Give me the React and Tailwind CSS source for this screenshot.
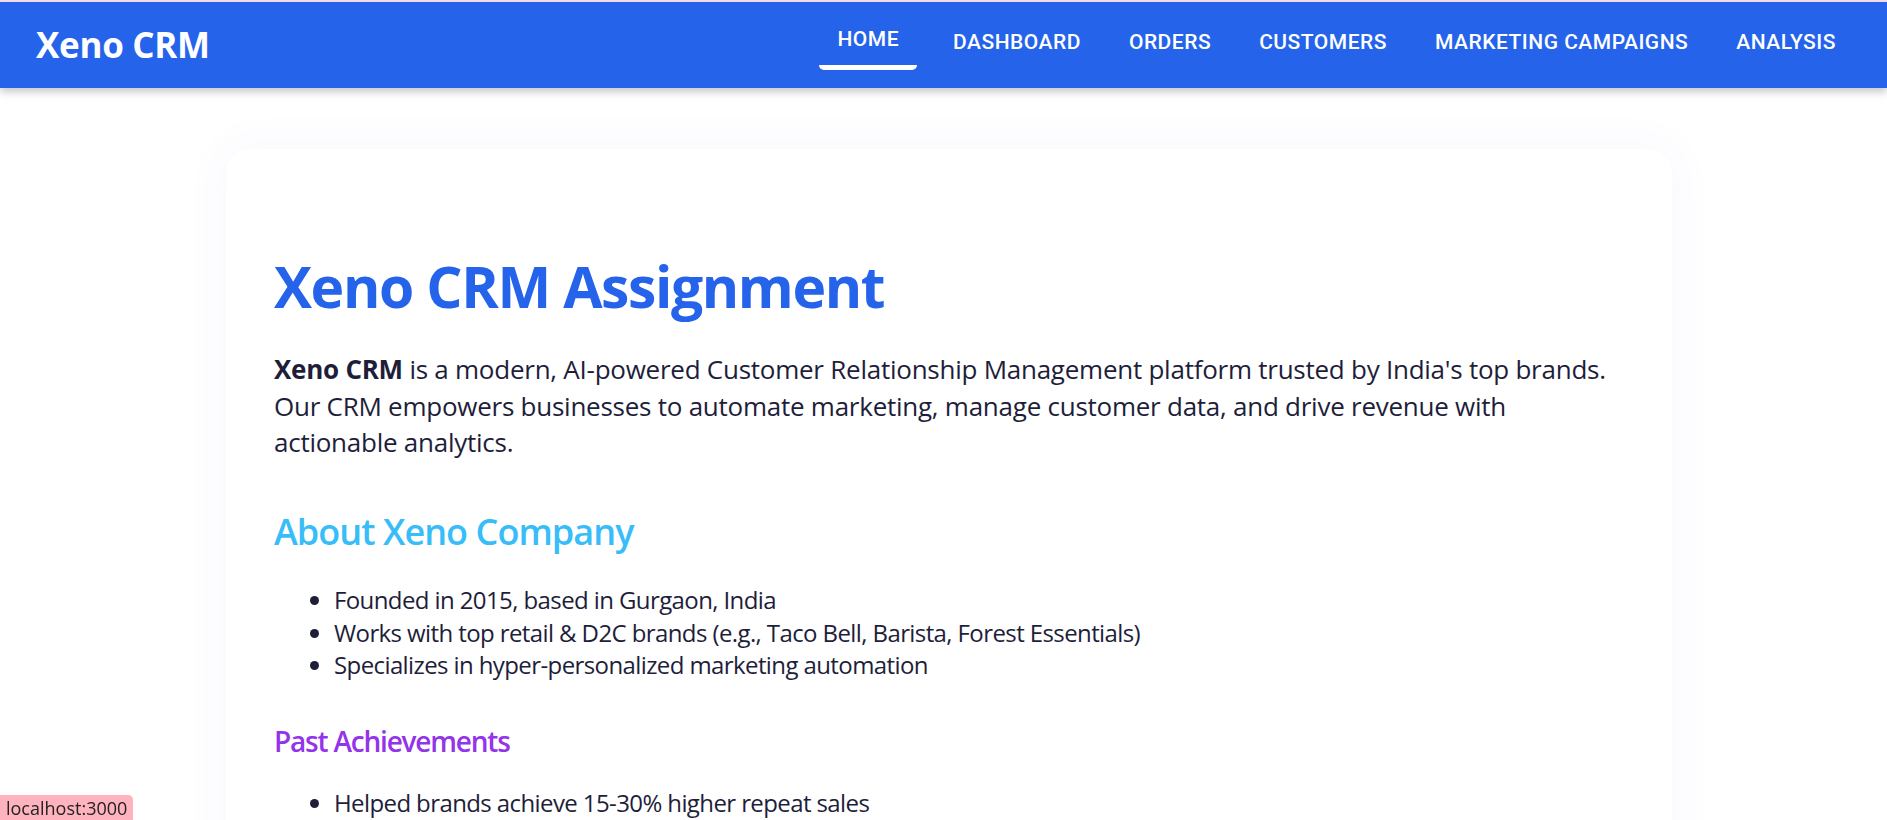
const links = ["Home", "Dashboard", "Orders", "Customers", "Marketing Campaigns", "Analysis"];

const Navbar = () => (
  <header className="relative z-10 flex h-[88px] items-center justify-between border-t-2 border-[#f4dce6] bg-[#2563eb] pl-[36px] pr-[33px] shadow-[0_4px_8px_rgba(0,0,0,0.22)]">
    <span className="font-['Open_Sans',sans-serif] text-[35px] font-bold tracking-[-0.3px] text-white">Xeno CRM</span>
    <nav className="flex items-center gap-3 pb-[7px] font-['Roboto',sans-serif]">
      {links.map((label, i) => (
        <a
          key={label}
          className={`relative cursor-pointer px-[18px] text-[21px] font-medium uppercase leading-[36px] tracking-[0.5px] text-white ${
            i === 0 ? "mr-[6px] -translate-y-[3px]" : ""
          }`}
        >
          {label}
          {i === 0 && <span className="absolute left-0 right-0 top-[44px] h-[5px] rounded-b-[6px] bg-white" />}
        </a>
      ))}
    </nav>
  </header>
);

export default function App() {
  return (
    <div className="min-h-screen bg-white font-['Open_Sans',sans-serif] text-[#1e1e3a]">
      <Navbar />
      <main className="pt-[61px]">
        <div className="ml-[226px] w-[1446px] rounded-[24px] bg-white px-12 pb-12 pt-[103px] shadow-[0_0_44px_6px_rgba(79,70,229,0.035)]">
          <h1 className="text-[57px] font-bold leading-[1.2] tracking-[-1.4px] text-[#2563eb]">Xeno CRM Assignment</h1>
          <p className="mt-[31px] text-[26px] leading-[36.5px] tracking-[-0.25px]">
            <strong className="font-bold">Xeno CRM</strong> is a modern, AI-powered Customer Relationship Management platform trusted by India's top brands. Our CRM empowers businesses to automate marketing, manage customer data, and drive revenue with actionable analytics.
          </p>

          <h2 className="mt-[49px] text-[36px] font-semibold leading-[1.2] tracking-[-0.95px] text-[#38bdf8]">About Xeno Company</h2>
          <ul className="mt-[31px] list-disc pl-[60px] text-[24px] leading-[32.5px] tracking-[-0.6px]">
            <li>Founded in 2015, based in Gurgaon, India</li>
            <li>Works with top retail &amp; D2C brands (e.g., Taco Bell, Barista, Forest Essentials)</li>
            <li>Specializes in hyper-personalized marketing automation</li>
          </ul>

          <h3 className="mt-[43px] text-[28px] font-semibold leading-[1.2] tracking-[-1.2px] text-[#9333ea]">Past Achievements</h3>
          <ul className="mt-[29px] list-disc pl-[60px] text-[24px] leading-[32.5px] tracking-[-0.6px]">
            <li>Helped brands achieve 15-30% higher repeat sales</li>
            <li>Automated over 10 million personalized campaigns</li>
            <li>Integrated AI insights for customer segmentation</li>
          </ul>
        </div>
      </main>
      <div className="fixed bottom-0 left-0 rounded-tr-[5px] bg-[#ffb3bf] px-[6px] pt-[1px] text-[18px] leading-[24px] text-[#222]">localhost:3000</div>
    </div>
  );
}
